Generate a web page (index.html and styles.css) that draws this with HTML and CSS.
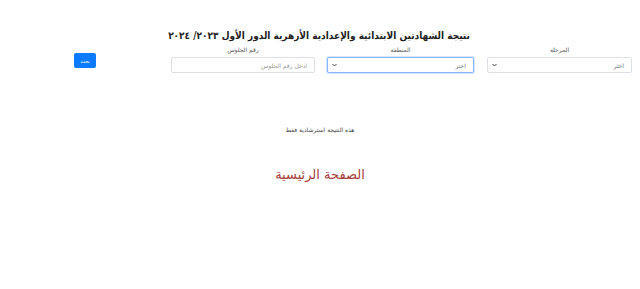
FILE: index.html
```html
<!DOCTYPE html>
<html lang="ar" dir="rtl">
<head>
<meta charset="utf-8">
<title>نتيجة الشهادتين</title>
<link rel="stylesheet" href="styles.css">
</head>
<body>
<div class="page">
  <h1 class="title">نتيجة الشهادتين الابتدائية والإعدادية الأزهرية الدور الأول ٢٠٢٣/ ٢٠٢٤</h1>
  <form class="search">
    <div class="field f1">
      <label class="lbl">المرحلة</label>
      <div class="select"><span>اختر</span><svg class="caret" width="5" height="4" viewBox="0 0 5 4"><path d="M0.5 1 L2.5 3 L4.5 1" fill="none" stroke="#333" stroke-width="0.9"/></svg></div>
    </div>
    <div class="field f2">
      <label class="lbl">المنطقة</label>
      <div class="select focus"><span>اختر</span><svg class="caret" width="5" height="4" viewBox="0 0 5 4"><path d="M0.5 1 L2.5 3 L4.5 1" fill="none" stroke="#333" stroke-width="0.9"/></svg></div>
    </div>
    <div class="field f3">
      <label class="lbl">رقم الجلوس</label>
      <div class="input"><span>ادخل رقم الجلوس</span></div>
    </div>
    <div class="btn-col">
      <button type="button" class="btn">بحث</button>
    </div>
  </form>
  <p class="note">هذه النتيجة استرشادية فقط</p>
  <p class="home">الصفحة الرئيسية</p>
</div>
</body>
</html>
```
FILE: styles.css
```css
html, body {
  margin: 0;
  padding: 0;
  background: #ffffff;
}
body {
  font-family: "DejaVu Sans", "Noto Sans", sans-serif;
  color: #212529;
}
.page {
  padding-top: 26px;
}
.title {
  margin: 0;
  text-align: center;
  font-family: "DejaVu Sans Condensed", "DejaVu Sans", sans-serif;
  font-size: 10px;
  font-weight: bold;
  line-height: 19px;
  color: #222;
  padding-right: 2px;
}
.search {
  display: flex;
  flex-direction: row;
  padding: 0 8px;
  margin-top: 0;
}
.field {
  display: flex;
  flex-direction: column;
}
.f1 { width: 145px; }
.f2 { width: 147px; margin-right: 13px; }
.f3 { width: 144px; margin-right: 12px; }
.lbl {
  text-align: center;
  font-size: 6px;
  color: #555;
  line-height: 10px;
  height: 12px;
}
.select, .input {
  box-sizing: border-box;
  height: 16px;
  border: 1px solid #dcdfe3;
  border-radius: 2px;
  display: flex;
  align-items: center;
  justify-content: space-between;
  padding: 0 7px 0 4px;
  font-size: 6px;
  color: #6c757d;
  background: #fff;
}
.select.focus {
  border-color: #86b7fe;
  box-shadow: 0 0 0 1px rgba(13, 110, 253, 0.18);
}
.caret {
  display: block;
}
.input span {
  color: #999;
}
.btn-col {
  display: flex;
  align-items: flex-start;
  margin-right: 75px;
  padding-top: 8px;
}
.btn {
  width: 22px;
  height: 15px;
  padding: 0;
  border: none;
  border-radius: 2px;
  background: #0d7bff;
  color: #fff;
  font-family: "DejaVu Sans", sans-serif;
  font-size: 5px;
}
.note {
  margin: 52px 0 0;
  text-align: center;
  font-size: 6px;
  color: #444;
  line-height: 10px;
}
.home {
  margin: 31px 0 0;
  text-align: center;
  font-size: 13px;
  line-height: 18px;
  color: #a6403a;
}
```
